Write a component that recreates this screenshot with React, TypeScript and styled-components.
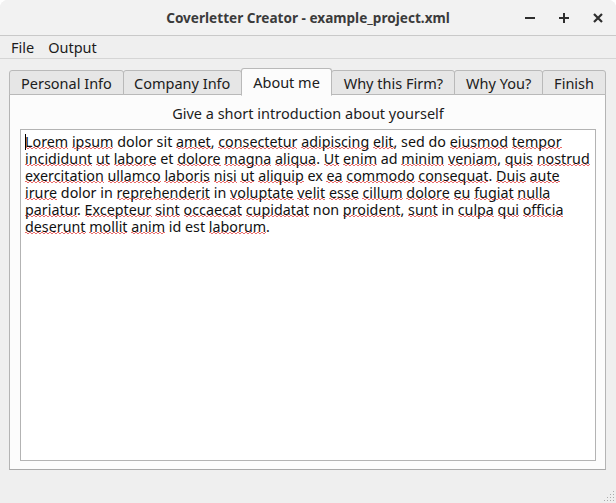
import React from "react";
import styled, { createGlobalStyle } from "styled-components";

const Global = createGlobalStyle`
  html, body { margin: 0; padding: 0; background: #ffffff; }
  body { font-family: "Noto Sans", "Open Sans", sans-serif; }
  * { box-sizing: border-box; }
`;

const FONT = `"Noto Sans", "Open Sans", sans-serif`;
const SPELL = "rgba(228, 70, 70, 0.8)";

const Window = styled.div`
  position: relative;
  width: 616px;
  height: 503px;
  background: #efefef;
  display: flex;
  flex-direction: column;
  font-family: ${FONT};
  color: #1c1c1c;
  border-radius: 8px 8px 0 0;
  overflow: hidden;
`;

const TitleBar = styled.div`
  height: 36px;
  flex: none;
  display: flex;
  align-items: center;
  justify-content: center;
  position: relative;
  background: #f2f2f2;
  border-bottom: 1px solid #c9c9c9;
`;

const Title = styled.div`
  font-weight: 700;
  font-size: 13.6px;
  color: #3b3b3b;
`;

const Controls = styled.div`
  position: absolute;
  right: 6px;
  top: 0;
  height: 35px;
  display: flex;
  align-items: center;
  gap: 10px;
`;

const CtrlBtn = styled.div`
  width: 24px;
  height: 24px;
  display: flex;
  align-items: center;
  justify-content: center;
`;

const MenuBar = styled.div`
  height: 23px;
  flex: none;
  display: flex;
  align-items: center;
  padding-left: 4px;
  border-bottom: 1px solid #d5d5d5;
  background: #efefef;
`;

const MenuItem = styled.div`
  font-size: 14.5px;
  padding: 0 7px;
  color: #1c1c1c;
  line-height: 20px;
`;

const Body = styled.div`
  flex: 1;
  display: flex;
  flex-direction: column;
  padding: 9px 10px 0 9px;
`;

const TabBar = styled.div`
  display: flex;
  align-items: flex-end;
  height: 27px;
  position: relative;
  z-index: 1;
`;

const Tab = styled.div<{ $w: number; $active?: boolean }>`
  width: ${(p) => p.$w}px;
  height: ${(p) => (p.$active ? 28 : 25)}px;
  margin-bottom: ${(p) => (p.$active ? -1 : 0)}px;
  margin-left: -1px;
  &:first-child { margin-left: 0; }
  display: flex;
  align-items: center;
  justify-content: center;
  font-size: 14.5px;
  color: #202020;
  background: ${(p) => (p.$active ? "#fcfcfc" : "#e6e6e6")};
  border: 1px solid #b9b9b9;
  border-bottom: ${(p) => (p.$active ? "1px solid #fcfcfc" : "1px solid #b9b9b9")};
  border-radius: 3px 3px 0 0;
  padding-top: ${(p) => (p.$active ? 0 : 1)}px;
  position: relative;
  z-index: ${(p) => (p.$active ? 2 : 1)};
`;

const Pane = styled.div`
  width: 597px;
  height: 376px;
  margin-top: -1px;
  background: #fcfcfc;
  border: 1px solid #b4b4b4;
  border-bottom-color: #a9a9a9;
  display: flex;
  flex-direction: column;
  padding: 8px 9px 8px 10px;
  gap: 6px;
`;

const Prompt = styled.div`
  height: 20px;
  line-height: 20px;
  text-align: center;
  font-size: 14.5px;
  color: #1c1c1c;
`;

const Editor = styled.div`
  position: relative;
  flex: 1;
  background: #ffffff;
  border: 1px solid #b3b3b3;
  padding: 3px 4px;
  font-size: 14.3px;
  line-height: 17px;
  color: #111111;
`;

const Line = styled.div`
  white-space: nowrap;
  height: 17px;
`;

const Word = styled.span<{ $bad?: boolean }>`
  background-image: ${(p) =>
    p.$bad
      ? `repeating-linear-gradient(90deg, ${SPELL} 0 2px, transparent 2px 4px),
         repeating-linear-gradient(90deg, transparent 0 2px, ${SPELL} 2px 4px)`
      : "none"};
  background-size: 100% 1px, 100% 1px;
  background-position: 0 calc(100% - 3px), 0 calc(100% - 2px);
  background-repeat: no-repeat;
`;

const Caret = styled.div`
  position: absolute;
  left: 4px;
  top: 4px;
  width: 1px;
  height: 16px;
  background: #000;
`;

const Grip = styled.svg`
  position: absolute;
  right: 1px;
  bottom: 1px;
`;

const OK = new Set([
  "dolor", "sit", "sed", "do", "et", "ad", "in", "ex", "id", "est", "non",
]);

const LINES = [
  "Lorem ipsum dolor sit amet, consectetur adipiscing elit, sed do eiusmod tempor",
  "incididunt ut labore et dolore magna aliqua. Ut enim ad minim veniam, quis nostrud",
  "exercitation ullamco laboris nisi ut aliquip ex ea commodo consequat. Duis aute",
  "irure dolor in reprehenderit in voluptate velit esse cillum dolore eu fugiat nulla",
  "pariatur. Excepteur sint occaecat cupidatat non proident, sunt in culpa qui officia",
  "deserunt mollit anim id est laborum.",
];

function renderLine(text: string) {
  const parts = text.split(" ");
  return parts.map((tok, i) => {
    const m = tok.match(/^([A-Za-z]+)(.*)$/);
    const word = m ? m[1] : tok;
    const rest = m ? m[2] : "";
    const bad = !OK.has(word);
    return (
      <React.Fragment key={i}>
        <Word $bad={bad}>{word}</Word>
        {rest}
        {i < parts.length - 1 ? " " : ""}
      </React.Fragment>
    );
  });
}

const TABS: { label: string; w: number; active?: boolean }[] = [
  { label: "Personal Info", w: 115 },
  { label: "Company Info", w: 119 },
  { label: "About me", w: 92, active: true },
  { label: "Why this Firm?", w: 124 },
  { label: "Why You?", w: 89 },
  { label: "Finish", w: 64 },
];

export default function App() {
  return (
    <Window>
      <Global />
      <TitleBar>
        <Title>Coverletter Creator - example_project.xml</Title>
        <Controls>
          <CtrlBtn>
            <svg width="12" height="12" viewBox="0 0 12 12">
              <rect x="1" y="5" width="10" height="2" fill="#2e2e2e" />
            </svg>
          </CtrlBtn>
          <CtrlBtn>
            <svg width="12" height="12" viewBox="0 0 12 12">
              <rect x="1" y="5" width="10" height="2" fill="#2e2e2e" />
              <rect x="5" y="1" width="2" height="10" fill="#2e2e2e" />
            </svg>
          </CtrlBtn>
          <CtrlBtn>
            <svg width="12" height="12" viewBox="0 0 12 12">
              <path d="M2 2 L10 10 M10 2 L2 10" stroke="#2e2e2e" strokeWidth="2.2" />
            </svg>
          </CtrlBtn>
        </Controls>
      </TitleBar>
      <MenuBar>
        <MenuItem>File</MenuItem>
        <MenuItem>Output</MenuItem>
      </MenuBar>
      <Body>
        <TabBar>
          {TABS.map((t) => (
            <Tab key={t.label} $w={t.w} $active={t.active}>
              {t.label}
            </Tab>
          ))}
        </TabBar>
        <Pane>
          <Prompt>Give a short introduction about yourself</Prompt>
          <Editor>
            <Caret />
            {LINES.map((l, i) => (
              <Line key={i}>{renderLine(l)}</Line>
            ))}
          </Editor>
        </Pane>
      </Body>
      <Grip width="14" height="14" viewBox="0 0 14 14">
        {[
          [12, 3], [12, 6], [12, 9], [12, 12],
          [9, 6], [9, 9], [9, 12],
          [6, 9], [6, 12], [3, 12],
        ].map(([x, y], i) => (
          <rect key={i} x={x} y={y} width="1" height="1" fill="#aaaaaa" />
        ))}
      </Grip>
    </Window>
  );
}
